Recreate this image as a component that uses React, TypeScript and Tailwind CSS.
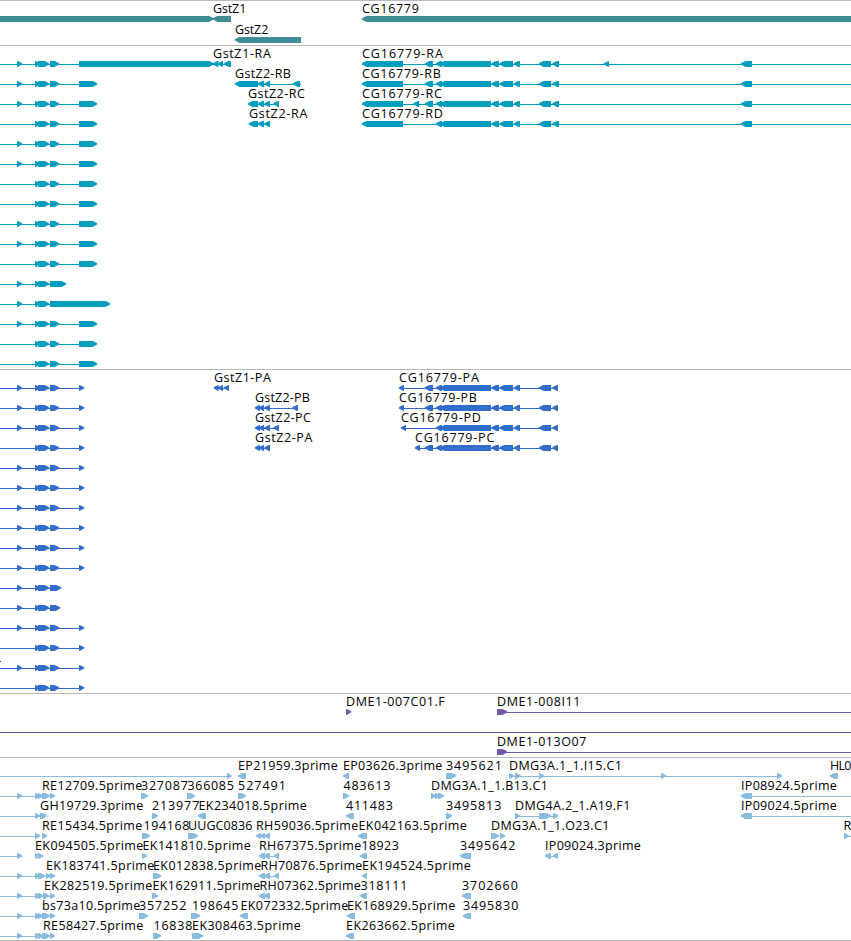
import React from "react";

type Dir = "L" | "R";
type Exon = [Dir, number, number];
type Span = [number, number];
type Label = [string, number, number];
interface Lane {
  spans?: Span[];
  exons?: Exon[];
  labels?: Label[];
}

const WIDTH = 851;
const TIP = 5;

/** Exon box with a tapered end that points in the direction of transcription. */
function arrowPoints(dir: Dir, x1: number, x2: number, y: number): string {
  const t = y - 3;
  const b = y + 3;
  const m = y - 0.1;
  const tip = Math.min(TIP, x2 - x1);
  return dir === "R"
    ? `${x1},${t} ${x2 - tip + 0.5},${t} ${x2 - tip * 0.35},${t + 1.3} ${x2 + 0.8},${m} ${x2 - tip * 0.35},${b - 1.4} ${x2 - tip + 0.5},${b} ${x1},${b}`
    : `${x2},${t} ${x1 + tip - 0.5},${t} ${x1 + tip * 0.35},${t + 1.3} ${x1 - 0.8},${m} ${x1 + tip * 0.35},${b - 1.4} ${x1 + tip - 0.5},${b} ${x2},${b}`;
}

function Track({ name, lanes, height, step = 20, color, tick }: { name: string; lanes: Lane[]; height: number; step?: number; color: string; tick?: number }) {
  return (
    <section aria-label={name} className={`border-t border-[#bababa] ${color}`}>
      <svg width={WIDTH} height={height} className="block overflow-hidden">
        {tick !== undefined && <rect x={0} y={tick} width={1} height={1} className="fill-[#333333]" />}
        {lanes.map((lane, i) => {
          const y = 18 + i * step;
          return (
            <g key={i}>
              {lane.spans?.map(([a, b], j) => (
                <rect key={j} x={a} y={y} width={b - a} height={1} fill="currentColor" />
              ))}
              {lane.exons?.map(([d, a, b], j) => (
                <polygon key={j} points={arrowPoints(d, a, b, y)} fill="currentColor" />
              ))}
            </g>
          );
        })}
        {lanes.map((lane, i) =>
          lane.labels?.map(([text, a, b]) => (
            <text
              key={text}
              x={a - 0.5}
              y={12 + i * step}
              textLength={b - a + 0.8}
              lengthAdjust="spacing"
              className="fill-black text-[12.5px] font-['Open_Sans','Noto_Sans',sans-serif]"
            >
              {text}
            </text>
          )),
        )}
      </svg>
    </section>
  );
}

const genes: Lane[] = [
  {
    exons: [["R", -10, 213.5], ["L", 213, 231], ["L", 362, 870]],
    labels: [["GstZ1", 213.5, 246], ["CG16779", 362.5, 418.5]],
  },
  { exons: [["L", 235, 301]], labels: [["GstZ2", 235.5, 268]] },
];

/** Shared 5' exons of the left-hand gene. */
function leftModel(first: boolean, fourthEnd: number, last?: Span): Lane {
  const exons: Exon[] = [["R", 35, 40], ["R", 38, 49], ["R", 50, fourthEnd]];
  if (first) exons.unshift(["R", 17, 22]);
  if (last) exons.push(["R", last[0], last[1]]);
  return { spans: [[0, last ? last[1] - 1 : fourthEnd - 1]], exons };
}

function merge(a: Lane, b?: Lane): Lane {
  return {
    spans: [...(a.spans ?? []), ...(b?.spans ?? [])],
    exons: [...(a.exons ?? []), ...(b?.exons ?? [])],
    labels: [...(a.labels ?? []), ...(b?.labels ?? [])],
  };
}

const core: Exon[] = [
  ["L", 436, 442], ["L", 440, 491], ["L", 491.5, 499], ["L", 499.5, 513],
  ["L", 514, 520], ["L", 539, 551],
];
const cgEnd: Exon[] = [["L", 552.5, 559], ["L", 741, 752]];
const exon425: Exon = ["L", 425, 433];

const transcriptExtras: Lane[] = [
  {
    spans: [[213, 230], [362, WIDTH]],
    exons: [["L", 213, 218.5], ["L", 218, 223], ["L", 224, 231], ["L", 362, 403], exon425, ...core, ...cgEnd, ["L", 604, 609]],
    labels: [["GstZ1-RA", 213.5, 270.5], ["CG16779-RA", 362.5, 442.5]],
  },
  {
    spans: [[237, 301], [362, WIDTH]],
    exons: [["L", 235, 258], ["L", 258, 264], ["L", 264.5, 270], ["L", 293, 300], ["L", 362, 403], exon425, ...core, ...cgEnd],
    labels: [["GstZ2-RB", 235.5, 290.5], ["CG16779-RB", 362.5, 440.5]],
  },
  {
    spans: [[250, 278], [362, WIDTH]],
    exons: [["L", 248, 258], ["L", 258, 264], ["L", 264.5, 270], ["L", 273.5, 279], ["L", 362, 403], ["L", 413.5, 419], exon425, ...core, ...cgEnd],
    labels: [["GstZ2-RC", 248.5, 304.5], ["CG16779-RC", 362.5, 441.5]],
  },
  {
    spans: [[250, 269], [362, WIDTH]],
    exons: [["L", 249, 258], ["L", 258, 264], ["L", 264.5, 270], ["L", 362, 403], ...core, ...cgEnd],
    labels: [["GstZ2-RA", 249.5, 307], ["CG16779-RD", 362.5, 442.5]],
  },
];

const E: Span = [79, 97];
const transcripts: Lane[] = [
  leftModel(true, 59, [79, 213.5]), leftModel(true, 59, E), leftModel(true, 59, E), leftModel(false, 59, E),
  leftModel(true, 59, E), leftModel(true, 59, E), leftModel(false, 59, E), leftModel(false, 59, E),
  leftModel(true, 59, E), leftModel(true, 59, E), leftModel(false, 59, E), leftModel(true, 66),
  leftModel(true, 110), leftModel(true, 59, E), leftModel(false, 59, E), leftModel(false, 59, E),
].map((l, i) => merge(l, transcriptExtras[i]));

const lastCds: Exon = ["L", 552.5, 558];
const z2: Exon[] = [["L", 255, 260], ["L", 259, 264], ["L", 264.5, 270]];
const proteinExtras: Lane[] = [
  {
    spans: [[215, 228], [400, 557]],
    exons: [["L", 214, 218.5], ["L", 218, 223], ["L", 224, 229], ["L", 399, 404], exon425, ...core, lastCds],
    labels: [["GstZ1-PA", 214.5, 270.5], ["CG16779-PA", 399.5, 478.5]],
  },
  {
    spans: [[256, 297], [400, 557]],
    exons: [...z2, ["L", 292.5, 298], ["L", 399, 404], exon425, ...core, lastCds],
    labels: [["GstZ2-PB", 255.5, 309.5], ["CG16779-PB", 399.5, 476.5]],
  },
  {
    spans: [[256, 278], [402, 557]],
    exons: [...z2, ["L", 273.5, 279], ["L", 401, 406], ...core, lastCds],
    labels: [["GstZ2-PC", 255.5, 310.5], ["CG16779-PD", 401.5, 480.5]],
  },
  {
    spans: [[256, 269], [416, 557]],
    exons: [...z2, ["L", 415, 420], exon425, ...core, lastCds],
    labels: [["GstZ2-PA", 255.5, 312], ["CG16779-PC", 415.5, 494]],
  },
];

const P: Span = [79, 84];
const proteins: Lane[] = [
  leftModel(true, 59, P), leftModel(true, 59, P), leftModel(true, 59, P), leftModel(false, 59, P),
  leftModel(true, 59, P), leftModel(true, 59, P), leftModel(true, 59, P), leftModel(true, 59, P),
  leftModel(true, 59, P), leftModel(true, 59, P), leftModel(true, 61), leftModel(true, 60),
  leftModel(true, 59, P), leftModel(false, 59, P), leftModel(true, 59, P), leftModel(false, 59, P),
].map((l, i) => merge(l, proteinExtras[i]));

const cdna: Lane[] = [
  {
    spans: [[500, WIDTH]],
    exons: [["R", 346, 351], ["R", 497, 507]],
    labels: [["DME1-007C01.F", 346.5, 444.5], ["DME1-008I11", 497.5, 580]],
  },
  { spans: [[0, WIDTH]] },
  { spans: [[500, WIDTH]], exons: [["R", 497, 507]], labels: [["DME1-013O07", 497.5, 586]] },
];

const ests: Lane[] = [
  {
    spans: [[0, 229], [510, 780]],
    exons: [["R", 227, 231.5], ["L", 238, 246], ["L", 343, 349], ["R", 446, 456], ["R", 509, 514], ["R", 515, 520.5], ["R", 539, 544], ["R", 661, 666], ["R", 777, 782], ["L", 830, 838]],
    labels: [["EP21959.3prime", 238.5, 337.5], ["EP03626.3prime", 343.5, 442], ["3495621", 446.5, 501.5], ["DMG3A.1_1.I15.C1", 509.5, 621.5], ["HL0", 830.5, 851]],
  },
  {
    spans: [[0, 54], [745, WIDTH]],
    exons: [["R", 17, 22], ["R", 35, 40], ["R", 38, 43], ["R", 42, 50], ["R", 50, 55], ["R", 141, 148], ["R", 187, 195], ["R", 238, 246], ["R", 343, 349], ["R", 431, 436], ["R", 435, 440], ["R", 438, 444], ["L", 741, 752]],
    labels: [["RE12709.5prime", 42.5, 142], ["327087", 141.5, 187.5], ["366085", 188, 233.5], ["527491", 238.5, 285.5], ["483613", 344, 390], ["DMG3A.1_1.B13.C1", 431.5, 547.5], ["IP08924.5prime", 741.5, 836.5]],
  },
  {
    spans: [[0, 45], [517, 556], [745, WIDTH]],
    exons: [["R", 35, 40], ["R", 40, 47], ["R", 152, 158], ["L", 198, 206], ["L", 346, 354], ["R", 446, 452], ["R", 515, 520], ["R", 539, 551], ["R", 553, 558], ["L", 741, 752]],
    labels: [["GH19729.3prime", 40.5, 143], ["213977", 152.5, 199], ["EK234018.5prime", 199, 306.5], ["411483", 346.5, 392.5], ["3495813", 446.5, 501], ["DMG4A.2_1.A19.F1", 515.5, 630], ["IP09024.5prime", 741.5, 836.5]],
  },
  {
    spans: [[0, 39], [847, WIDTH]],
    exons: [["R", 35, 40], ["R", 42, 47], ["R", 142, 150], ["R", 188, 198], ["L", 256, 261], ["L", 260, 265], ["L", 264.5, 270], ["L", 358, 367], ["R", 491, 499], ["R", 500, 505], ["R", 844, 849]],
    labels: [["RE15434.5prime", 42.5, 142], ["194168", 144, 189], ["UUGC0836", 188.5, 252], ["RH59036.5prime", 256.5, 358], ["EK042163.5prime", 359, 466.5], ["DMG3A.1_1.O23.C1", 491.5, 609], ["R", 844, 850.5]],
  },
  {
    spans: [[0, 20], [263, 277], [547, 557]],
    exons: [["R", 17, 22], ["R", 35, 40], ["R", 38, 43], ["R", 142, 147], ["L", 259, 265], ["L", 264, 270], ["L", 274, 279], ["L", 360, 367], ["L", 460, 471], ["L", 545, 551], ["L", 553, 558]],
    labels: [["EK094505.5prime", 35.5, 143], ["EK141810.5prime", 143, 250.5], ["RH67375.5prime", 259.5, 361], ["18923", 362, 398.5], ["3495642", 460.5, 515], ["IP09024.3prime", 545.5, 640.5]],
  },
  {
    spans: [[0, 54], [263, 277]],
    exons: [["R", 17, 22], ["R", 35, 40], ["R", 38, 45], ["R", 46, 51], ["R", 50, 55], ["R", 153, 161], ["L", 259, 265], ["L", 264, 270], ["L", 274, 279], ["L", 362, 367]],
    labels: [["EK183741.5prime", 46.5, 154], ["EK012838.5prime", 153.5, 261], ["RH70876.5prime", 261, 362], ["EK194524.5prime", 362.5, 470.5]],
  },
  {
    spans: [[0, 54]],
    exons: [["R", 17, 22], ["R", 35, 40], ["R", 38, 43], ["R", 43, 49], ["R", 50, 55], ["R", 152, 158], ["L", 259, 265], ["L", 264, 270], ["L", 360, 367], ["L", 462, 471]],
    labels: [["EK282519.5prime", 44.5, 152], ["EK162911.5prime", 153, 260], ["RH07362.5prime", 260, 360.5], ["318111", 361, 407], ["3702660", 462.5, 517.5]],
  },
  {
    spans: [[0, 54]],
    exons: [["R", 17, 22], ["R", 35, 40], ["R", 38, 43], ["R", 42, 50], ["R", 50, 55], ["R", 139, 148], ["R", 191, 200], ["L", 240, 248], ["L", 347, 355], ["L", 463, 471]],
    labels: [["bs73a10.5prime", 42.5, 140], ["357252", 139.5, 186], ["198645", 192.5, 238], ["EK072332.5prime", 241, 348], ["EK168929.5prime", 347.5, 455], ["3495830", 463.5, 518]],
  },
  {
    spans: [[0, 54]],
    exons: [["R", 17, 22], ["R", 35, 40], ["R", 38, 43], ["R", 42, 50], ["R", 50, 55], ["R", 153, 161], ["R", 192, 203], ["L", 346, 354]],
    labels: [["RE58427.5prime", 43.5, 143], ["16838", 154, 192], ["EK308463.5prime", 192.5, 300.5], ["EK263662.5prime", 346.5, 454.5]],
  },
];

export default function App() {
  return (
    <main className="flex w-[851px] flex-col overflow-hidden border-b border-[#bababa] bg-white">
      <Track name="Genes" lanes={genes} height={44} step={21} color="text-[#3f8e96]" />
      <Track name="Transcripts" lanes={transcripts} height={323} color="text-[#009dbf]" />
      <Track name="Proteins" lanes={proteins} height={323} color="text-[#326dcc]" tick={291} />
      <Track name="cDNA clones" lanes={cdna} height={63} color="text-[#7357a7]" />
      <Track name="ESTs" lanes={ests} height={182} color="text-[#88bbdd]" />
    </main>
  );
}
